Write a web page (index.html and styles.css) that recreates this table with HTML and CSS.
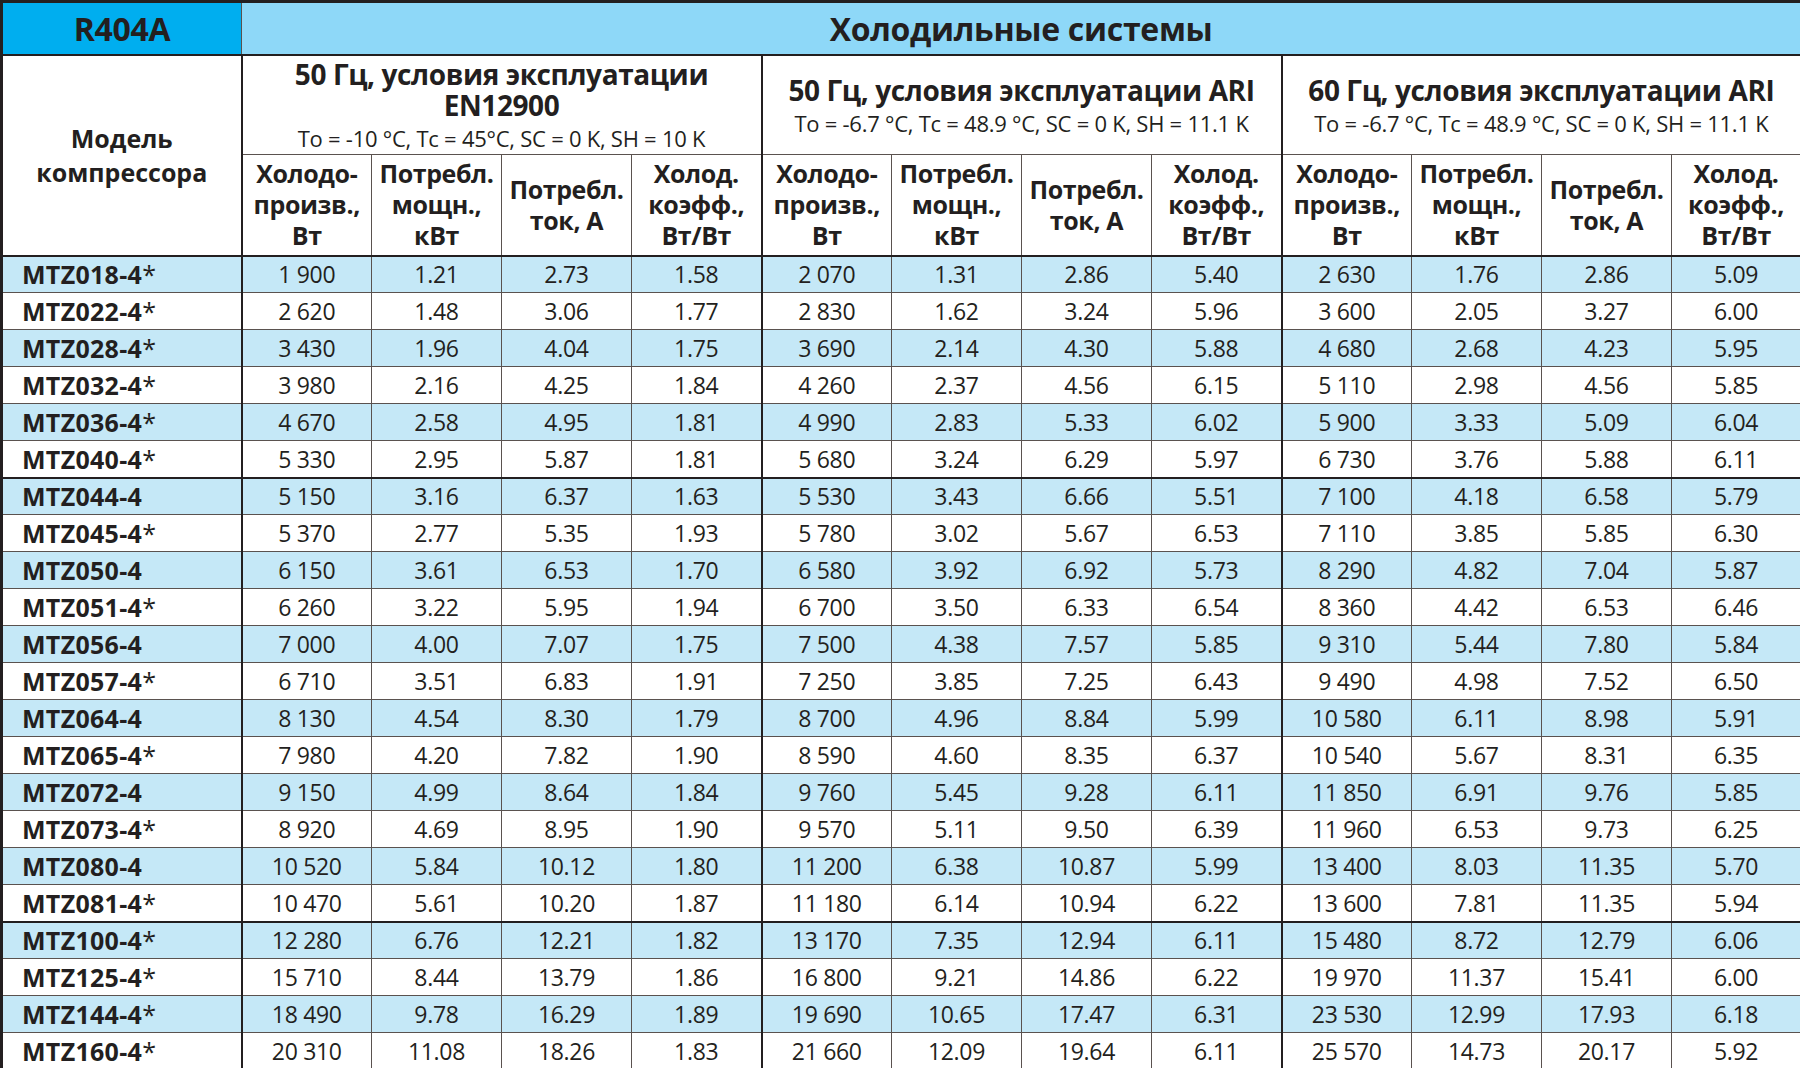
FILE: index.html
```html
<!DOCTYPE html>
<html lang="ru">
<head>
<meta charset="utf-8">
<title>R404A — Холодильные системы</title>
<link rel="stylesheet" href="styles.css">
</head>
<body>
<table class="spec">
<colgroup>
<col class="c-model">
<col class="c-val"><col class="c-val"><col class="c-val"><col class="c-val">
<col class="c-val"><col class="c-val"><col class="c-val"><col class="c-val">
<col class="c-val"><col class="c-val"><col class="c-val"><col class="c-val">
</colgroup>
<thead>
<tr class="h1">
<th class="refrigerant">R404A</th>
<th class="systems" colspan="12">Холодильные системы</th>
</tr>
<tr class="h2">
<th class="model-head" rowspan="2">Модель<br>компрессора</th>
<th class="group gl" colspan="4"><div class="gtitle">50 Гц, условия эксплуатации<br>EN12900</div><div class="gsub">To = -10 °C, Tc = 45°C, SC = 0 K, SH = 10 K</div></th>
<th class="group gl" colspan="4"><div class="gtitle">50 Гц, условия эксплуатации ARI</div><div class="gsub">To = -6.7 °C, Tc = 48.9 °C, SC = 0 K, SH = 11.1 K</div></th>
<th class="group gl" colspan="4"><div class="gtitle">60 Гц, условия эксплуатации ARI</div><div class="gsub">To = -6.7 °C, Tc = 48.9 °C, SC = 0 K, SH = 11.1 K</div></th>
</tr>
<tr class="h3">
<th class="gl">Холодо-<br>произв.,<br>Вт</th><th>Потребл.<br>мощн.,<br>кВт</th><th>Потребл.<br>ток, А</th><th>Холод.<br>коэфф.,<br>Вт/Вт</th>
<th class="gl">Холодо-<br>произв.,<br>Вт</th><th>Потребл.<br>мощн.,<br>кВт</th><th>Потребл.<br>ток, А</th><th>Холод.<br>коэфф.,<br>Вт/Вт</th>
<th class="gl">Холодо-<br>произв.,<br>Вт</th><th>Потребл.<br>мощн.,<br>кВт</th><th>Потребл.<br>ток, А</th><th>Холод.<br>коэфф.,<br>Вт/Вт</th>
</tr>
</thead>
<tbody>
<tr class="alt"><th>MTZ018-4<span class="ast">*</span></th><td class="gl">1 900</td><td>1.21</td><td>2.73</td><td>1.58</td><td class="gl">2 070</td><td>1.31</td><td>2.86</td><td>5.40</td><td class="gl">2 630</td><td>1.76</td><td>2.86</td><td>5.09</td></tr>
<tr><th>MTZ022-4<span class="ast">*</span></th><td class="gl">2 620</td><td>1.48</td><td>3.06</td><td>1.77</td><td class="gl">2 830</td><td>1.62</td><td>3.24</td><td>5.96</td><td class="gl">3 600</td><td>2.05</td><td>3.27</td><td>6.00</td></tr>
<tr class="alt"><th>MTZ028-4<span class="ast">*</span></th><td class="gl">3 430</td><td>1.96</td><td>4.04</td><td>1.75</td><td class="gl">3 690</td><td>2.14</td><td>4.30</td><td>5.88</td><td class="gl">4 680</td><td>2.68</td><td>4.23</td><td>5.95</td></tr>
<tr><th>MTZ032-4<span class="ast">*</span></th><td class="gl">3 980</td><td>2.16</td><td>4.25</td><td>1.84</td><td class="gl">4 260</td><td>2.37</td><td>4.56</td><td>6.15</td><td class="gl">5 110</td><td>2.98</td><td>4.56</td><td>5.85</td></tr>
<tr class="alt"><th>MTZ036-4<span class="ast">*</span></th><td class="gl">4 670</td><td>2.58</td><td>4.95</td><td>1.81</td><td class="gl">4 990</td><td>2.83</td><td>5.33</td><td>6.02</td><td class="gl">5 900</td><td>3.33</td><td>5.09</td><td>6.04</td></tr>
<tr class="sep"><th>MTZ040-4<span class="ast">*</span></th><td class="gl">5 330</td><td>2.95</td><td>5.87</td><td>1.81</td><td class="gl">5 680</td><td>3.24</td><td>6.29</td><td>5.97</td><td class="gl">6 730</td><td>3.76</td><td>5.88</td><td>6.11</td></tr>
<tr class="alt"><th>MTZ044-4</th><td class="gl">5 150</td><td>3.16</td><td>6.37</td><td>1.63</td><td class="gl">5 530</td><td>3.43</td><td>6.66</td><td>5.51</td><td class="gl">7 100</td><td>4.18</td><td>6.58</td><td>5.79</td></tr>
<tr><th>MTZ045-4<span class="ast">*</span></th><td class="gl">5 370</td><td>2.77</td><td>5.35</td><td>1.93</td><td class="gl">5 780</td><td>3.02</td><td>5.67</td><td>6.53</td><td class="gl">7 110</td><td>3.85</td><td>5.85</td><td>6.30</td></tr>
<tr class="alt"><th>MTZ050-4</th><td class="gl">6 150</td><td>3.61</td><td>6.53</td><td>1.70</td><td class="gl">6 580</td><td>3.92</td><td>6.92</td><td>5.73</td><td class="gl">8 290</td><td>4.82</td><td>7.04</td><td>5.87</td></tr>
<tr><th>MTZ051-4<span class="ast">*</span></th><td class="gl">6 260</td><td>3.22</td><td>5.95</td><td>1.94</td><td class="gl">6 700</td><td>3.50</td><td>6.33</td><td>6.54</td><td class="gl">8 360</td><td>4.42</td><td>6.53</td><td>6.46</td></tr>
<tr class="alt"><th>MTZ056-4</th><td class="gl">7 000</td><td>4.00</td><td>7.07</td><td>1.75</td><td class="gl">7 500</td><td>4.38</td><td>7.57</td><td>5.85</td><td class="gl">9 310</td><td>5.44</td><td>7.80</td><td>5.84</td></tr>
<tr><th>MTZ057-4<span class="ast">*</span></th><td class="gl">6 710</td><td>3.51</td><td>6.83</td><td>1.91</td><td class="gl">7 250</td><td>3.85</td><td>7.25</td><td>6.43</td><td class="gl">9 490</td><td>4.98</td><td>7.52</td><td>6.50</td></tr>
<tr class="alt"><th>MTZ064-4</th><td class="gl">8 130</td><td>4.54</td><td>8.30</td><td>1.79</td><td class="gl">8 700</td><td>4.96</td><td>8.84</td><td>5.99</td><td class="gl">10 580</td><td>6.11</td><td>8.98</td><td>5.91</td></tr>
<tr><th>MTZ065-4<span class="ast">*</span></th><td class="gl">7 980</td><td>4.20</td><td>7.82</td><td>1.90</td><td class="gl">8 590</td><td>4.60</td><td>8.35</td><td>6.37</td><td class="gl">10 540</td><td>5.67</td><td>8.31</td><td>6.35</td></tr>
<tr class="alt"><th>MTZ072-4</th><td class="gl">9 150</td><td>4.99</td><td>8.64</td><td>1.84</td><td class="gl">9 760</td><td>5.45</td><td>9.28</td><td>6.11</td><td class="gl">11 850</td><td>6.91</td><td>9.76</td><td>5.85</td></tr>
<tr><th>MTZ073-4<span class="ast">*</span></th><td class="gl">8 920</td><td>4.69</td><td>8.95</td><td>1.90</td><td class="gl">9 570</td><td>5.11</td><td>9.50</td><td>6.39</td><td class="gl">11 960</td><td>6.53</td><td>9.73</td><td>6.25</td></tr>
<tr class="alt"><th>MTZ080-4</th><td class="gl">10 520</td><td>5.84</td><td>10.12</td><td>1.80</td><td class="gl">11 200</td><td>6.38</td><td>10.87</td><td>5.99</td><td class="gl">13 400</td><td>8.03</td><td>11.35</td><td>5.70</td></tr>
<tr class="sep"><th>MTZ081-4<span class="ast">*</span></th><td class="gl">10 470</td><td>5.61</td><td>10.20</td><td>1.87</td><td class="gl">11 180</td><td>6.14</td><td>10.94</td><td>6.22</td><td class="gl">13 600</td><td>7.81</td><td>11.35</td><td>5.94</td></tr>
<tr class="alt"><th>MTZ100-4<span class="ast">*</span></th><td class="gl">12 280</td><td>6.76</td><td>12.21</td><td>1.82</td><td class="gl">13 170</td><td>7.35</td><td>12.94</td><td>6.11</td><td class="gl">15 480</td><td>8.72</td><td>12.79</td><td>6.06</td></tr>
<tr><th>MTZ125-4<span class="ast">*</span></th><td class="gl">15 710</td><td>8.44</td><td>13.79</td><td>1.86</td><td class="gl">16 800</td><td>9.21</td><td>14.86</td><td>6.22</td><td class="gl">19 970</td><td>11.37</td><td>15.41</td><td>6.00</td></tr>
<tr class="alt"><th>MTZ144-4<span class="ast">*</span></th><td class="gl">18 490</td><td>9.78</td><td>16.29</td><td>1.89</td><td class="gl">19 690</td><td>10.65</td><td>17.47</td><td>6.31</td><td class="gl">23 530</td><td>12.99</td><td>17.93</td><td>6.18</td></tr>
<tr><th>MTZ160-4<span class="ast">*</span></th><td class="gl">20 310</td><td>11.08</td><td>18.26</td><td>1.83</td><td class="gl">21 660</td><td>12.09</td><td>19.64</td><td>6.11</td><td class="gl">25 570</td><td>14.73</td><td>20.17</td><td>5.92</td></tr>
</tbody>
</table>
</body>
</html>
```
FILE: styles.css
```css
html, body {
  margin: 0;
  padding: 0;
  background: #ffffff;
}

body {
  font-family: "Open Sans", "Noto Sans", sans-serif;
  color: #231f20;
}

.spec {
  width: 1800px;
  table-layout: fixed;
  border-collapse: collapse;
  border: 3px solid #231f20;
}

.c-model { width: 240px; }
.c-val { width: 130px; }

.spec th,
.spec td {
  padding: 0;
  text-align: center;
  vertical-align: middle;
  border: 1px solid #5a524f;
}

/* header row 1 */
.spec .h1 { height: 53px; }
.spec .h1 th {
  font-size: 32px;
  font-weight: 700;
  border-bottom: 2px solid #231f20;
  letter-spacing: -0.3px;
}
.spec .refrigerant {
  background: #00aeef;
  letter-spacing: 0.6px;
}
.spec .systems { background: #8ed8f8; }

/* header row 2 */
.spec .h2 { height: 100px; }
.spec .model-head {
  font-size: 25px;
  font-weight: 700;
  line-height: 34px;
  border-right: 2px solid #231f20;
  border-bottom: 2px solid #231f20;
  letter-spacing: 0;
}
.spec .group { padding-top: 1px; }
.gtitle {
  font-size: 28px;
  font-weight: 700;
  line-height: 31px;
  letter-spacing: -0.4px;
}
.gsub {
  font-size: 22px;
  font-weight: 400;
  line-height: 26px;
  letter-spacing: -0.25px;
  margin-top: 4px;
}

/* header row 3 */
.spec .h3 { height: 101px; }
.spec .h3 th {
  font-size: 25px;
  font-weight: 700;
  line-height: 31px;
  letter-spacing: -0.4px;
  border-bottom: 2px solid #231f20;
}

.spec .gl { border-left: 2px solid #231f20; }

/* data rows */
.spec tbody tr { height: 37px; }
.spec tbody th {
  text-align: left;
  padding-left: 19px;
  font-size: 25px;
  font-weight: 700;
  letter-spacing: 0.3px;
  border-right: 2px solid #231f20;
}
.spec tbody td {
  font-size: 23px;
  font-weight: 400;
  letter-spacing: -0.3px;
}
.ast { font-weight: 400; }

.spec tbody tr.alt th,
.spec tbody tr.alt td { background: #c5e8f7; }

.spec tbody tr.sep th,
.spec tbody tr.sep td { border-bottom: 2px solid #231f20; }
```
